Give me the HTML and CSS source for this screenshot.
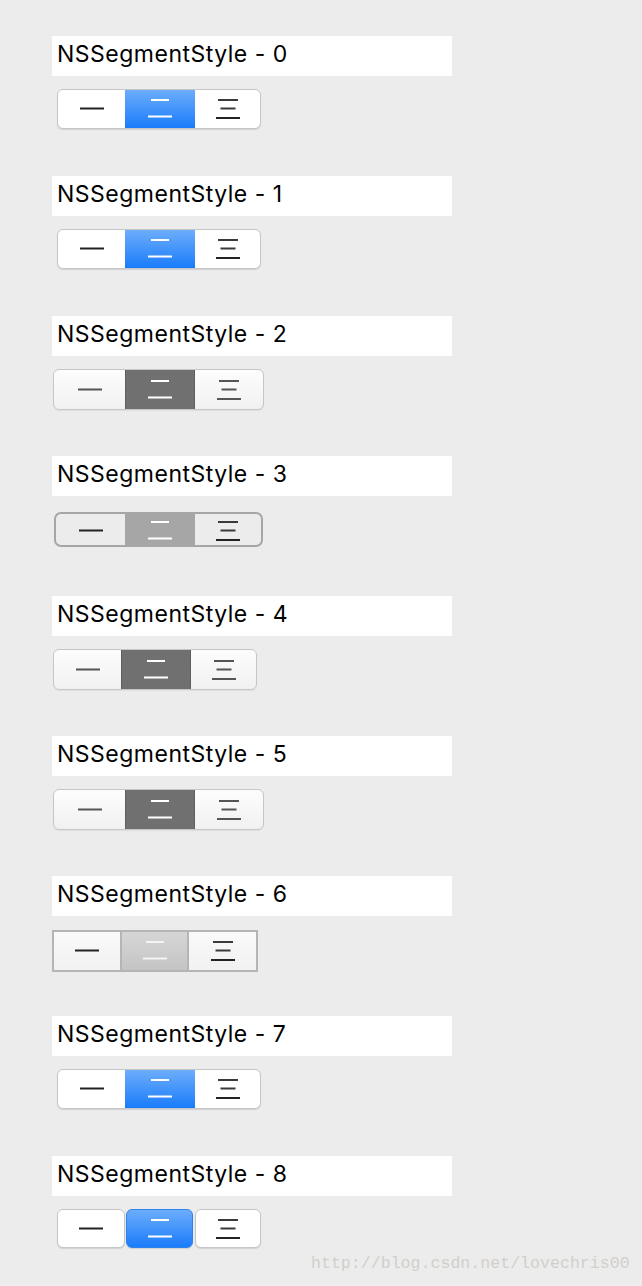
FILE: index.html
```html
<!DOCTYPE html>
<html lang="en">
<head>
  <meta charset="UTF-8" />
  <title>NSSegmentStyle</title>
  <link rel="stylesheet" href="styles.css">
</head>
<body>
  <main class="page">

    <section class="item">
      <div class="label">NSSegmentStyle - 0</div>
      <div class="seg s-rounded">
        <div class="cell"><svg class="ico" viewBox="0 0 24 20"><rect x="0" y="8.5" width="24" height="2"/></svg></div>
        <div class="cell on"><svg class="ico" viewBox="0 0 24 20"><rect x="3" y="0" width="18" height="2"/><rect x="0" y="16.5" width="24" height="2"/></svg></div>
        <div class="cell"><svg class="ico" viewBox="0 0 24 20"><rect x="2" y="0" width="20" height="2" class="lt"/><rect x="4.5" y="8.5" width="15" height="2" class="lt"/><rect x="0" y="18" width="24" height="2"/></svg></div>
      </div>
    </section>

    <section class="item">
      <div class="label">NSSegmentStyle - 1</div>
      <div class="seg s-rounded">
        <div class="cell"><svg class="ico" viewBox="0 0 24 20"><rect x="0" y="8.5" width="24" height="2"/></svg></div>
        <div class="cell on"><svg class="ico" viewBox="0 0 24 20"><rect x="3" y="0" width="18" height="2"/><rect x="0" y="16.5" width="24" height="2"/></svg></div>
        <div class="cell"><svg class="ico" viewBox="0 0 24 20"><rect x="2" y="0" width="20" height="2" class="lt"/><rect x="4.5" y="8.5" width="15" height="2" class="lt"/><rect x="0" y="18" width="24" height="2"/></svg></div>
      </div>
    </section>

    <section class="item">
      <div class="label">NSSegmentStyle - 2</div>
      <div class="seg s-textured">
        <div class="cell"><svg class="ico" viewBox="0 0 24 20"><rect x="0" y="8.5" width="24" height="2"/></svg></div>
        <div class="cell on"><svg class="ico" viewBox="0 0 24 20"><rect x="3" y="0" width="18" height="2"/><rect x="0" y="16.5" width="24" height="2"/></svg></div>
        <div class="cell"><svg class="ico" viewBox="0 0 24 20"><rect x="2" y="0" width="20" height="2"/><rect x="4.5" y="8.5" width="15" height="2"/><rect x="0" y="18" width="24" height="2"/></svg></div>
      </div>
    </section>

    <section class="item">
      <div class="label">NSSegmentStyle - 3</div>
      <div class="seg s-capsule">
        <div class="cell"><svg class="ico" viewBox="0 0 24 20"><rect x="0" y="8.5" width="24" height="2"/></svg></div>
        <div class="cell on"><svg class="ico" viewBox="0 0 24 20"><rect x="3" y="0" width="18" height="2"/><rect x="0" y="16.5" width="24" height="2"/></svg></div>
        <div class="cell"><svg class="ico" viewBox="0 0 24 20"><rect x="2" y="0" width="20" height="2" class="lt"/><rect x="4.5" y="8.5" width="15" height="2" class="lt"/><rect x="0" y="18" width="24" height="2"/></svg></div>
      </div>
    </section>

    <section class="item">
      <div class="label">NSSegmentStyle - 4</div>
      <div class="seg s-textured s-square">
        <div class="cell"><svg class="ico" viewBox="0 0 24 20"><rect x="0" y="8.5" width="24" height="2"/></svg></div>
        <div class="cell on"><svg class="ico" viewBox="0 0 24 20"><rect x="3" y="0" width="18" height="2"/><rect x="0" y="16.5" width="24" height="2"/></svg></div>
        <div class="cell"><svg class="ico" viewBox="0 0 24 20"><rect x="2" y="0" width="20" height="2"/><rect x="4.5" y="8.5" width="15" height="2"/><rect x="0" y="18" width="24" height="2"/></svg></div>
      </div>
    </section>

    <section class="item">
      <div class="label">NSSegmentStyle - 5</div>
      <div class="seg s-textured">
        <div class="cell"><svg class="ico" viewBox="0 0 24 20"><rect x="0" y="8.5" width="24" height="2"/></svg></div>
        <div class="cell on"><svg class="ico" viewBox="0 0 24 20"><rect x="3" y="0" width="18" height="2"/><rect x="0" y="16.5" width="24" height="2"/></svg></div>
        <div class="cell"><svg class="ico" viewBox="0 0 24 20"><rect x="2" y="0" width="20" height="2"/><rect x="4.5" y="8.5" width="15" height="2"/><rect x="0" y="18" width="24" height="2"/></svg></div>
      </div>
    </section>

    <section class="item">
      <div class="label">NSSegmentStyle - 6</div>
      <div class="seg s-small">
        <div class="cell"><svg class="ico" viewBox="0 0 24 20"><rect x="0" y="8.5" width="24" height="2"/></svg></div>
        <div class="cell on"><svg class="ico" viewBox="0 0 24 20"><rect x="3" y="0" width="18" height="2"/><rect x="0" y="16.5" width="24" height="2"/></svg></div>
        <div class="cell"><svg class="ico" viewBox="0 0 24 20"><rect x="2" y="0" width="20" height="2" class="lt"/><rect x="4.5" y="8.5" width="15" height="2" class="lt"/><rect x="0" y="18" width="24" height="2"/></svg></div>
      </div>
    </section>

    <section class="item">
      <div class="label">NSSegmentStyle - 7</div>
      <div class="seg s-rounded">
        <div class="cell"><svg class="ico" viewBox="0 0 24 20"><rect x="0" y="8.5" width="24" height="2"/></svg></div>
        <div class="cell on"><svg class="ico" viewBox="0 0 24 20"><rect x="3" y="0" width="18" height="2"/><rect x="0" y="16.5" width="24" height="2"/></svg></div>
        <div class="cell"><svg class="ico" viewBox="0 0 24 20"><rect x="2" y="0" width="20" height="2" class="lt"/><rect x="4.5" y="8.5" width="15" height="2" class="lt"/><rect x="0" y="18" width="24" height="2"/></svg></div>
      </div>
    </section>

    <section class="item">
      <div class="label">NSSegmentStyle - 8</div>
      <div class="seg s-separated">
        <div class="cell"><svg class="ico" viewBox="0 0 24 20"><rect x="0" y="8.5" width="24" height="2"/></svg></div>
        <div class="cell on"><svg class="ico" viewBox="0 0 24 20"><rect x="3" y="0" width="18" height="2"/><rect x="0" y="16.5" width="24" height="2"/></svg></div>
        <div class="cell"><svg class="ico" viewBox="0 0 24 20"><rect x="2" y="0" width="20" height="2" class="lt"/><rect x="4.5" y="8.5" width="15" height="2" class="lt"/><rect x="0" y="18" width="24" height="2"/></svg></div>
      </div>
    </section>

  </main>

  <div class="watermark">http://blog.csdn.net/lovechris00</div>
</body>
</html>
```

FILE: styles.css
```css
body {
  margin: 0;
  background-color: #ececec;
  font-family: 'Inter', 'Liberation Sans', sans-serif;
  color: #000;
}
.page { padding: 36px 0 0 52px; }
.item { height: 140px; display: flex; flex-direction: column; align-items: flex-start; }
.label { width: 395px; height: 40px; background: #fff; padding-left: 5px; font-size: 23px; letter-spacing: 0.5px; line-height: 36px; }

/* segmented control, base */
.seg { display: flex; margin-top: 13px; box-sizing: border-box; }
.cell { display: flex; align-items: center; justify-content: center; box-sizing: border-box; }
.cell:nth-child(1) { width: 68px; }
.cell:nth-child(2) { width: 70px; }
.cell:nth-child(3) { width: 66px; }
.ico { width: 24px; height: 20px; fill: #222; }
.ico .lt { fill: #3a3a3a; }
.on .ico, .on .ico .lt { fill: #fff; }

/* 0, 1, 7 - rounded */
.s-rounded { margin-left: 5px; height: 40px; border: 1px solid #c6c6c6; border-radius: 6px; background: #fff; box-shadow: 0 1px 1px rgba(0,0,0,0.12); overflow: hidden; }
.s-rounded .cell:nth-child(1) { width: 67px; }
.s-rounded .cell:nth-child(3) { width: 65px; }
.s-rounded .on { background: linear-gradient(#6cadfb, #1a7cfb); }

/* 2, 5 - textured rounded */
.s-textured { margin-left: 1px; height: 41px; border: 1px solid #c6c6c6; border-radius: 6px; background: linear-gradient(#fdfdfd, #f1f1f1); overflow: hidden; box-shadow: 0 1px 1px rgba(0,0,0,0.06); }
.s-textured .cell:nth-child(1) { width: 71px; }
.s-textured .cell:nth-child(3) { width: 68px; }
.s-textured .on { background: #707070; border-left: 1px solid #5f5f5f; border-right: 1px solid #5f5f5f; }
.s-textured .ico { fill: #555; }
.s-textured .on .ico { fill: #fff; }

/* 4 - textured square */
.s-square { margin-left: 1px; }
.s-square .cell:nth-child(1) { width: 67px; }
.s-square .cell:nth-child(3) { width: 65px; }

/* 3 - capsule */
.s-capsule { margin-left: 2px; margin-top: 16px; height: 35px; border: 2px solid #a6a6a6; border-radius: 7px; background: #ececec; overflow: hidden; }
.s-capsule .cell:nth-child(1) { width: 69px; }
.s-capsule .cell:nth-child(3) { width: 66px; }
.s-capsule .on { background: #a6a6a6; }
.s-capsule .ico { margin-top: 2px; }

/* 6 - small square */
.s-small { margin-top: 14px; height: 42px; border: 2px solid #b5b5b5; background: linear-gradient(#fafafa, #f1f1f1); }
.s-small .cell:nth-child(1) { width: 66px; }
.s-small .cell:nth-child(2) { width: 69px; border-left: 2px solid #b5b5b5; border-right: 2px solid #b5b5b5; }
.s-small .cell:nth-child(3) { width: 67px; }
.s-small .on { background: linear-gradient(#d6d6d6, #c4c4c4); }
.s-small .on .ico { fill: #f4f4f4; }

/* 8 - separated */
.s-separated { margin-left: 5px; height: 39px; gap: 1px; }
.s-separated .cell { height: 39px; border: 1px solid #c6c6c6; border-radius: 6px; background: #fff; box-shadow: 0 1px 1px rgba(0,0,0,0.12); }
.s-separated .cell:nth-child(2) { width: 67px; border-color: #2f83ea; background: linear-gradient(#6cadfb, #1a7cfb); }
.s-separated .cell:nth-child(3) { margin-left: 1px; }

.watermark { position: absolute; left: 311px; top: 1254px; font-family: 'Liberation Mono', monospace; font-size: 16.6px; color: #d2cfca; }
```
